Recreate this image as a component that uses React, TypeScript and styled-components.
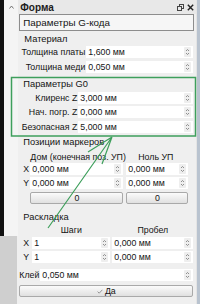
import React from 'react';
import styled, { createGlobalStyle } from 'styled-components';

const Global = createGlobalStyle`
  html, body { margin: 0; padding: 0; }
  body {
    width: 200px; height: 304px; overflow: hidden; background: #efefef;
    font-family: "Liberation Sans", Arial, sans-serif;
  }
`;

const Screen = styled.div`
  position: relative;
  width: 200px;
  height: 304px;
  display: flex;
  overflow: hidden;
  font-size: 8.8px;
  color: #141414;
`;

const ScrollCol = styled.div`
  width: 20px;
  display: flex;
  flex-direction: column;
`;

const Track = styled.div`
  flex: 1;
  border-left: 4px solid #111;
  background: #f4f4f4;
  display: flex;
  justify-content: center;
  padding-top: 5px;
`;

const Thumb = styled.div`
  height: 68px;
  width: 17px;
  background: #cfcfcf;
`;

const RightEdge = styled.div`
  width: 4px;
  background: linear-gradient(90deg, #e4e4e4 0 1px, #b9c3cf 1px);
`;

const Panel = styled.div`
  flex: 1;
  display: flex;
  flex-direction: column;
  background: #efefef;
  padding: 0 3px 0 1px;
`;

const TitleBar = styled.div`
  height: 14px;
  margin-left: -1px;
  margin-right: -3px;
  padding: 0 2px 0 2px;
  display: flex;
  align-items: center;
  justify-content: space-between;
  background: #e8e8e8;
`;

const Title = styled.span`
  font-weight: bold;
  font-size: 10px;
  color: #1c1c1c;
`;

const TitleIcons = styled.div`
  display: flex;
  gap: 3px;
  align-items: center;
`;

const Combo = styled.div`
  height: 17px;
  margin-right: -1px;
  box-sizing: border-box;
  border: 1px solid #8d8d8d;
  background: #f6f6f6;
  display: flex;
  align-items: center;
  padding-left: 3px;
  font-size: 9.8px;
`;

const GroupTitle = styled.div<{ $mt: number; $pl: number }>`
  height: 12px;
  line-height: 12px;
  margin-top: ${(p) => p.$mt}px;
  padding-left: ${(p) => p.$pl}px;
  font-size: 9.3px;
`;

const FormRow = styled.div<{ $mt: number; $label: number }>`
  height: 12px;
  margin-top: ${(p) => p.$mt}px;
  display: grid;
  grid-template-columns: ${(p) => p.$label}px 1fr;
`;

const RowLabel = styled.div<{ $align?: string }>`
  line-height: 12px;
  text-align: ${(p) => p.$align || 'right'};
  padding-right: 1px;
  white-space: nowrap;
  overflow: visible;
`;

const Field = styled.div`
  height: 12px;
  background: #fff;
  display: flex;
  align-items: center;
  padding-left: 2px;
  min-width: 0;
`;

const Value = styled.span`
  flex: 1;
  line-height: 12px;
  white-space: nowrap;
`;

const SpinBox = styled.div`
  width: 7px;
  height: 10px;
  margin-right: 2px;
  background: #eeeeee;
  border-radius: 1px;
  display: flex;
  align-items: center;
  justify-content: center;
`;

const Columns = styled.div<{ $mt: number; $cols: string; $gap: number }>`
  height: 12px;
  margin-top: ${(p) => p.$mt}px;
  display: grid;
  grid-template-columns: ${(p) => p.$cols};
  column-gap: ${(p) => p.$gap}px;
`;

const AxisLabel = styled.div`
  line-height: 12px;
  padding-left: 4px;
`;

const ColHead = styled.div`
  line-height: 12px;
  text-align: center;
  white-space: nowrap;
`;

const Button = styled.div<{ $mt?: number }>`
  height: 12px;
  margin-top: ${(p) => p.$mt || 0}px;
  box-sizing: border-box;
  border: 1px solid #a9a9a9;
  border-radius: 2px;
  background: linear-gradient(#fbfbfb, #e0e0e0);
  display: flex;
  align-items: center;
  justify-content: center;
  gap: 2px;
  line-height: 10px;
`;

const OffsetWrap = styled.div`
  margin-left: 3px;
  min-width: 0;
  display: flex;
  flex-direction: column;
`;

const Overlay = styled.svg`
  position: absolute;
  left: 0;
  top: 0;
  pointer-events: none;
`;

const Spin = () => (
  <SpinBox>
    <svg width="5" height="8" viewBox="0 0 5 8">
      <path d="M1 3 L2.5 1.5 L4 3" fill="none" stroke="#777" strokeWidth="0.8" />
      <path d="M1 5 L2.5 6.5 L4 5" fill="none" stroke="#777" strokeWidth="0.8" />
    </svg>
  </SpinBox>
);

const SpinField = ({ value }: { value: string }) => (
  <Field>
    <Value>{value}</Value>
    <Spin />
  </Field>
);

function SpinFieldOffset({ value }: { value: string }) {
  return (
    <OffsetWrap>
      <SpinField value={value} />
    </OffsetWrap>
  );
}

function OffsetButton({ children }: { children: React.ReactNode }) {
  return (
    <OffsetWrap>
      <Button>{children}</Button>
    </OffsetWrap>
  );
}

export default function App() {
  return (
    <Screen>
      <Global />
      <ScrollCol>
        <Track>
          <svg width="5" height="4" viewBox="0 0 5 4">
            <path d="M0.5 3.5 L2.5 1 L4.5 3.5" fill="none" stroke="#666" strokeWidth="0.9" />
          </svg>
        </Track>
        <Thumb />
      </ScrollCol>
      <Panel>
        <TitleBar>
          <Title>Форма</Title>
          <TitleIcons>
            <svg width="7" height="7" viewBox="0 0 7 7">
              <rect x="2.5" y="0.5" width="4" height="4" fill="none" stroke="#444" strokeWidth="1" />
              <rect x="0.5" y="2.5" width="4" height="4" fill="#e8e8e8" stroke="#444" strokeWidth="1" />
            </svg>
            <svg width="7" height="7" viewBox="0 0 7 7">
              <path d="M0.8 0.8 L6.2 6.2 M6.2 0.8 L0.8 6.2" stroke="#222" strokeWidth="1.4" />
            </svg>
          </TitleIcons>
        </TitleBar>
        <Combo>Параметры G-кода</Combo>

        <GroupTitle $mt={2} $pl={5}>Материал</GroupTitle>
        <FormRow $mt={1} $label={67}>
          <RowLabel>Толщина платы</RowLabel>
          <SpinField value="1,600 мм" />
        </FormRow>
        <FormRow $mt={3} $label={67}>
          <RowLabel>Толщина меди</RowLabel>
          <SpinField value="0,050 мм" />
        </FormRow>

        <GroupTitle $mt={5} $pl={4}>Параметры G0</GroupTitle>
        <FormRow $mt={2} $label={59}>
          <RowLabel>Клиренс Z</RowLabel>
          <SpinField value="3,000 мм" />
        </FormRow>
        <FormRow $mt={2} $label={59}>
          <RowLabel>Нач. погр. Z</RowLabel>
          <SpinField value="0,000 мм" />
        </FormRow>
        <FormRow $mt={3} $label={59}>
          <RowLabel>Безопасная Z</RowLabel>
          <SpinField value="5,000 мм" />
        </FormRow>

        <GroupTitle $mt={3} $pl={4}>Позиции маркеров</GroupTitle>
        <Columns $mt={3} $cols="11px 93px 65px" $gap={0}>
          <span />
          <ColHead>Дом (конечная поз. УП)</ColHead>
          <ColHead>Ноль УП</ColHead>
        </Columns>
        <Columns $mt={0} $cols="11px 93px 65px" $gap={0}>
          <AxisLabel>X</AxisLabel>
          <SpinField value="0,000 мм" />
          <SpinFieldOffset value="0,000 мм" />
        </Columns>
        <Columns $mt={2} $cols="11px 93px 65px" $gap={0}>
          <AxisLabel>Y</AxisLabel>
          <SpinField value="0,000 мм" />
          <SpinFieldOffset value="0,000 мм" />
        </Columns>
        <Columns $mt={3} $cols="11px 93px 65px" $gap={0}>
          <span />
          <Button>0</Button>
          <OffsetButton>0</OffsetButton>
        </Columns>

        <GroupTitle $mt={7} $pl={4}>Раскладка</GroupTitle>
        <Columns $mt={1} $cols="11px 78px 81px" $gap={2}>
          <span />
          <ColHead>Шаги</ColHead>
          <ColHead>Пробел</ColHead>
        </Columns>
        <Columns $mt={1} $cols="11px 78px 81px" $gap={2}>
          <AxisLabel>X</AxisLabel>
          <SpinField value="1" />
          <SpinField value="0,000 мм" />
        </Columns>
        <Columns $mt={2} $cols="11px 78px 81px" $gap={2}>
          <AxisLabel>Y</AxisLabel>
          <SpinField value="1" />
          <SpinField value="0,000 мм" />
        </Columns>

        <FormRow $mt={6} $label={21}>
          <RowLabel $align="left">Клей</RowLabel>
          <SpinField value="0,050 мм" />
        </FormRow>
        <Button $mt={4}>
          <svg width="6" height="5" viewBox="0 0 6 5">
            <path d="M0.6 2.6 L2.2 4.2 L5.4 0.8" fill="none" stroke="#8a8a8a" strokeWidth="0.9" />
          </svg>
          <span>Да</span>
        </Button>
      </Panel>
      <RightEdge />
      <Overlay width="200" height="304" viewBox="0 0 200 304">
        <rect x="11.5" y="77.5" width="184" height="58.5" fill="none" stroke="#3e9f5c" strokeWidth="1.5" />
        <path d="M112 137 L88 152 M112 137 L102 164 M112 137 L48 228" fill="none" stroke="#3e9f5c" strokeWidth="1.2" />
      </Overlay>
    </Screen>
  );
}
